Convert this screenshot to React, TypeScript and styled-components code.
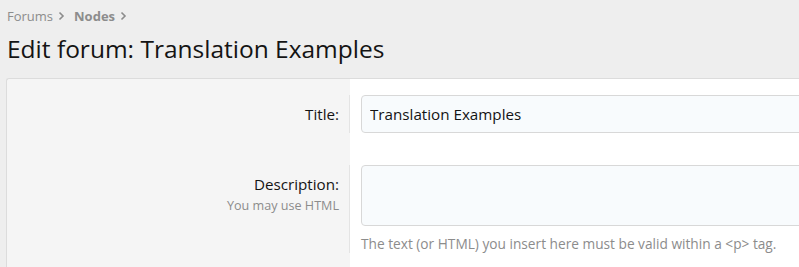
import styled, { createGlobalStyle } from "styled-components";

const GlobalStyle = createGlobalStyle`
    html, body {
        margin: 0;
        padding: 0;
        background: #eeeeee;
        font-family: "Open Sans", "Noto Sans", sans-serif;
        overflow: hidden;
    }
`;

function ChevronIcon() {
    return (
        <svg width="9" height="10" viewBox="0 0 9 10">
            <path
                d="M2.5 1.5 L6 5 L2.5 8.5"
                fill="none"
                stroke="currentColor"
                strokeWidth="1.6"
            />
        </svg>
    );
}

function App() {
    return (
        <Page>
            <GlobalStyle />
            <Breadcrumbs>
                <Crumb>
                    Forums <ChevronIcon />
                </Crumb>
                <Crumb $bold>
                    Nodes <ChevronIcon />
                </Crumb>
            </Breadcrumbs>
            <PageTitle>Edit forum: Translation Examples</PageTitle>
            <FormPanel>
                <FormRow>
                    <LabelCell>
                        <Label>Title:</Label>
                    </LabelCell>
                    <InputCell>
                        <TextInput defaultValue="Translation Examples" />
                    </InputCell>
                </FormRow>
                <FormRow>
                    <LabelCell>
                        <Label>Description:</Label>
                        <LabelHint>You may use HTML</LabelHint>
                    </LabelCell>
                    <InputCell>
                        <TextArea />
                        <Explain>
                            The text (or HTML) you insert here must be valid
                            within a &lt;p&gt; tag.
                        </Explain>
                    </InputCell>
                </FormRow>
            </FormPanel>
        </Page>
    );
}

const Page = styled.div`
    padding: 0 0 0 6px;
    height: 267px;
    box-sizing: border-box;
    overflow: hidden;
`;

const Breadcrumbs = styled.div`
    display: flex;
    gap: 8px;
    padding: 6px 0 0 1px;
    height: 26px;
    box-sizing: border-box;
`;

const Crumb = styled.span<{ $bold?: boolean }>`
    display: flex;
    align-items: center;
    gap: 4px;
    font-size: 13px;
    color: #8c8c8c;
    font-weight: ${(p) => (p.$bold ? 700 : 400)};
`;

const PageTitle = styled.h1`
    margin: 0;
    padding: 7px 0 0 1px;
    font-size: 24.5px;
    font-weight: 400;
    color: #141414;
    line-height: 32px;
    height: 52px;
    box-sizing: border-box;
`;

const FormPanel = styled.div`
    border: 1px solid #dcdcdc;
    border-right: none;
    border-radius: 3px 0 0 3px;
    background: linear-gradient(to right, #f5f5f5 343px, #ffffff 343px);
    padding-top: 16px;
    height: 200px;
    box-sizing: border-box;
    overflow: hidden;
`;

const FormRow = styled.div`
    display: grid;
    grid-template-columns: 343px 1fr;
    margin-bottom: 32px;
`;

const LabelCell = styled.div`
    display: flex;
    flex-direction: column;
    align-items: flex-end;
    padding: 8px 10px 0 0;
    border-right: 1px solid #e4e4e4;
`;

const Label = styled.div`
    font-size: 15.2px;
    color: #141414;
    line-height: 22px;
`;

const LabelHint = styled.div`
    font-size: 12.6px;
    color: #8c8c8c;
    line-height: 18px;
    margin-top: 2px;
`;

const InputCell = styled.div`
    padding-left: 11px;
    min-width: 0;
`;

const TextInput = styled.input`
    width: calc(100% + 20px);
    height: 38px;
    box-sizing: border-box;
    border: 1px solid #d8d8d8;
    border-radius: 4px;
    background: #f8fbfd;
    padding: 0 8px;
    font-family: inherit;
    font-size: 15.2px;
    color: #141414;
    outline: none;
`;

const TextArea = styled.textarea`
    display: block;
    width: calc(100% + 20px);
    height: 61px;
    box-sizing: border-box;
    border: 1px solid #d8d8d8;
    border-radius: 4px;
    background: #f8fbfd;
    resize: none;
    outline: none;
`;

const Explain = styled.div`
    margin-top: 8px;
    font-size: 13.7px;
    color: #8c8c8c;
    white-space: nowrap;
`;

export default App;
